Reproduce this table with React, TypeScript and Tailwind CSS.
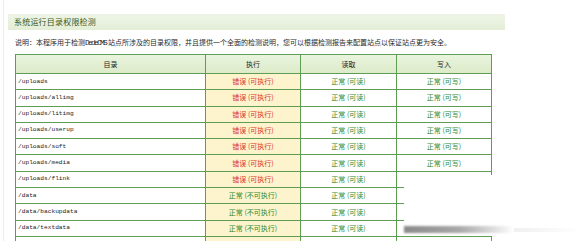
import React from "react";

const rows: { dir: string; ok: boolean }[] = [
  { dir: "/uploads", ok: false },
  { dir: "/uploads/allimg", ok: false },
  { dir: "/uploads/litimg", ok: false },
  { dir: "/uploads/userup", ok: false },
  { dir: "/uploads/soft", ok: false },
  { dir: "/uploads/media", ok: false },
  { dir: "/uploads/flink", ok: false },
  { dir: "/data", ok: true },
  { dir: "/data/backupdata", ok: true },
  { dir: "/data/textdata", ok: true },
  { dir: "", ok: true },
];

const cjk = "font-['SimSun','Noto_Sans_CJK_SC',sans-serif]";

export default function App() {
  return (
    <div className="relative w-[583px] h-[241px] overflow-hidden bg-white">
      <div className="ml-[3px] h-full border-l border-[#ececec] pt-[14px]">
        <div
          className={`ml-[4px] w-[497px] h-[16px] flex items-center pl-[6px] text-[8px] tracking-[0.2px] leading-none text-[#3a5722] bg-gradient-to-b from-[#eef5e6] to-[#e3eed6] ${cjk}`}
        >
          系统运行目录权限检测
        </div>
        <div
          className={`ml-[11px] mt-[7px] h-[11px] flex items-center text-[7px] leading-none text-[#2a2a2a] whitespace-nowrap ${cjk}`}
        >
          说明：本程序用于检测<span className="font-['Liberation_Mono',monospace] text-[8px] tracking-[-1.8px] mr-[2px]">DedeCMS</span>站点所涉及的目录权限，并且提供一个全面的检测说明，您可以根据检测报告来配置站点以保证站点更为安全。
        </div>
        <div className="ml-[11px] mt-[6px] w-[477px] border-l border-r border-t border-[#5f9e52]">
          <div
            className={`grid grid-cols-[189px_95px_96px_95px] h-[18px] bg-gradient-to-b from-[#eaf4de] to-[#dcebc9] text-[7px] leading-none text-[#222] ${cjk}`}
          >
            <div className="flex items-center justify-center">目录</div>
            <div className="flex items-center justify-center border-l border-[#5f9e52]">执行</div>
            <div className="flex items-center justify-center border-l border-[#5f9e52]">读取</div>
            <div className="flex items-center justify-center border-l border-[#5f9e52]">写入</div>
          </div>
          {rows.map((r, i) => (
            <div
              key={i}
              className={`grid grid-cols-[189px_95px_96px_95px] h-[16.3px] border-t border-[#5f9e52] text-[7px] leading-none ${cjk}`}
            >
              <div className="flex items-center pl-[2px] font-['Liberation_Mono',monospace] text-[6.2px] text-[#1a1a1a]">
                {r.dir}
              </div>
              <div
                className={`flex items-center justify-center border-l border-[#5f9e52] bg-[#fdf4cd] ${
                  r.ok ? "text-[#2f8a2c]" : "text-[#e0302a]"
                }`}
              >
                {r.dir ? (r.ok ? "正常 (不可执行)" : "错误 (可执行)") : ""}
              </div>
              <div className="flex items-center justify-center border-l border-[#5f9e52] text-[#2f8a2c]">
                {r.dir ? "正常 (可读)" : ""}
              </div>
              <div className="flex items-center justify-center border-l border-[#5f9e52] text-[#2f8a2c]">
                {r.dir ? "正常 (可写)" : ""}
              </div>
            </div>
          ))}
        </div>
      </div>
      <div className="absolute left-[404px] top-[175px] w-[179px] h-[61px] bg-white">
        <div className="absolute left-0 bottom-[3px] w-[110px] h-[7px] bg-gradient-to-r from-[#8a8a8a] via-[#a8a8a8] to-white blur-[1px]" />
        <div className="absolute left-[110px] bottom-[4px] w-[69px] h-[4px] bg-gradient-to-r from-[#f0f0f0] to-white" />
      </div>
    </div>
  );
}
